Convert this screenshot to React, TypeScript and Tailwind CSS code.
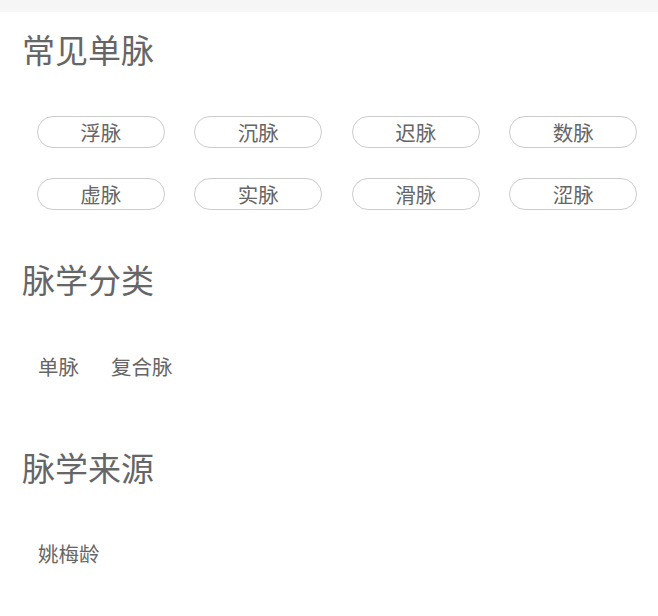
import React from 'react';

const font = { fontFamily: '"Noto Sans CJK SC", "Liberation Sans", sans-serif' };

const pulses = ['浮脉', '沉脉', '迟脉', '数脉', '虚脉', '实脉', '滑脉', '涩脉'];

const Section: React.FC<{ title: string; children: React.ReactNode }> = ({ title, children }) => (
  <section>
    <h2 className="pl-[22px] text-[33px] leading-[40px] text-[#666]">{title}</h2>
    {children}
  </section>
);

const App: React.FC = () => (
  <div className="w-[658px] min-h-[616px] bg-white text-[#666]" style={font}>
    <div className="h-[12px] bg-[#f6f6f6]" />
    <div className="pt-[17px]">
      <Section title="常见单脉">
        <div className="ml-[22px] mt-[47px] grid w-[630px] grid-cols-4 gap-y-[30px]">
          {pulses.map((p) => (
            <div key={p} className="flex justify-center">
              <div className="flex h-[32px] w-[128px] items-center justify-center rounded-full border border-[#ccc] text-[20.5px] leading-none">
                {p}
              </div>
            </div>
          ))}
        </div>
      </Section>
      <div className="mt-[49px]">
        <Section title="脉学分类">
          <div className="mt-[53px] flex gap-[32px] pl-[38px] text-[20.5px] leading-[28px]">
            <span>单脉</span>
            <span>复合脉</span>
          </div>
        </Section>
      </div>
      <div className="mt-[67px]">
        <Section title="脉学来源">
          <div className="mt-[52px] pl-[38px] text-[20.5px] leading-[28px]">姚梅龄</div>
        </Section>
      </div>
    </div>
  </div>
);

export default App;
